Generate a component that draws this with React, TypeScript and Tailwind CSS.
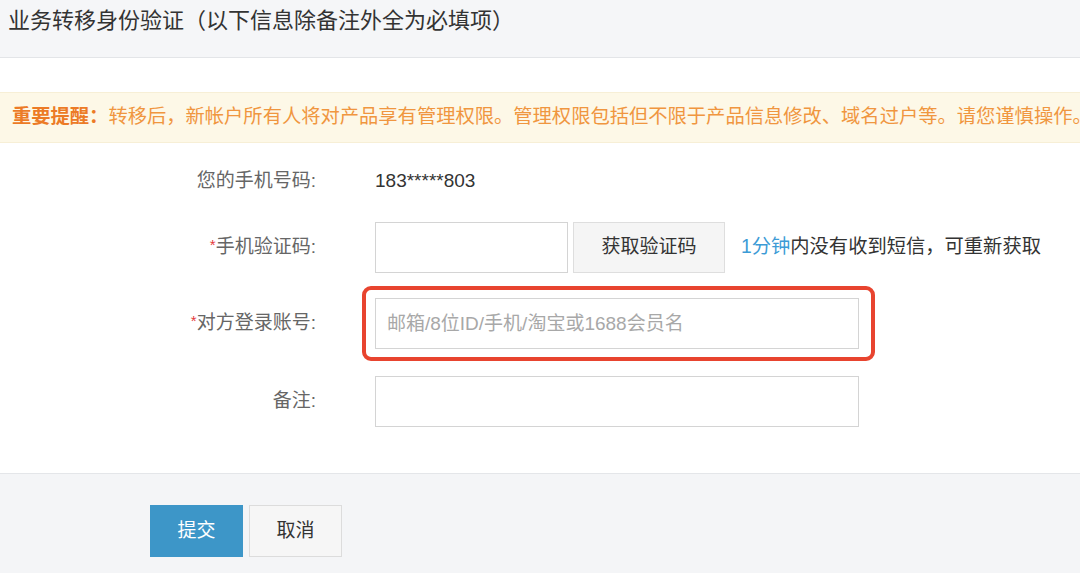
import React from 'react';

const font = "font-['Liberation_Sans','Noto_Sans_CJK_SC',sans-serif]";

const Label: React.FC<{ text: string; required?: boolean }> = ({ text, required }) => (
    <div className="w-[316px] shrink-0 text-right text-[19px] text-[#666666]">
        {required && <span className="text-[#e5393c] text-[15px] align-top relative top-[1px]">*</span>}
        {text}:
    </div>
);

export default function App() {
    const inputClasses = "h-[51px] border border-[#d4d4d4] bg-white px-[11px] text-[19px] text-[#333] outline-none placeholder:text-[#a8a8a8]";

    return (
        <div className={`w-full h-[573px] bg-white flex flex-col overflow-hidden ${font}`}>
            <div className="h-[58px] shrink-0 bg-[#f5f6f8] border-b border-[#e3e5e8] px-2 pt-[6px]">
                <h1 className="text-[22px] leading-[30px] text-[#333333]">业务转移身份验证（以下信息除备注外全为必填项）</h1>
            </div>

            <div className="h-[34px] shrink-0" />

            <div className="h-[51px] shrink-0 bg-[#fdf8e7] border-y border-[#f7efd6] flex items-center pl-3 whitespace-nowrap overflow-hidden text-[19.3px] text-[#f0963f]">
                <span className="font-bold text-[#ec7b26]">重要提醒：</span>
                转移后，新帐户所有人将对产品享有管理权限。管理权限包括但不限于产品信息修改、域名过户等。请您谨慎操作。
            </div>

            <div className="flex items-center h-[50px] mt-[13px]">
                <Label text="您的手机号码" />
                <span className="ml-[59px] text-[19px] text-[#333333]">183*****803</span>
            </div>

            <div className="flex items-center mt-[16px]">
                <Label text="手机验证码" required />
                <input className={`ml-[59px] w-[193px] ${inputClasses}`} />
                <button className="ml-[5px] w-[152px] h-[51px] bg-[#f5f5f5] border border-[#dedede] text-[19px] text-[#333333]">
                    获取验证码
                </button>
                <span className="ml-[16px] text-[19.3px] text-[#333333]">
                    <span className="text-[#3c9bd6]">1分钟</span>内没有收到短信，可重新获取
                </span>
            </div>

            <div className="flex items-center mt-[25px]">
                <Label text="对方登录账号" required />
                <div className="relative ml-[59px]">
                    <input className={`w-[484px] block ${inputClasses}`} placeholder="邮箱/8位ID/手机/淘宝或1688会员名" />
                    <div className="absolute -left-[13px] -top-[12px] -right-[16px] -bottom-[12px] border-[4px] border-[#e8442f] rounded-[9px] pointer-events-none" />
                </div>
            </div>

            <div className="flex items-center mt-[27px]">
                <Label text="备注" />
                <input className={`ml-[59px] w-[484px] ${inputClasses}`} />
            </div>

            <div className="h-[46px] shrink-0" />

            <div className="flex-1 bg-[#f4f5f7] border-t border-[#e4e6e9] pl-[150px] pt-[31px]">
                <div className="flex">
                    <button className="w-[93px] h-[52px] bg-[#3d96c8] text-white text-[19px]">提交</button>
                    <button className="ml-[6px] w-[93px] h-[52px] bg-[#f6f6f6] border border-[#dcdcdc] text-[19px] text-[#333333]">取消</button>
                </div>
            </div>
        </div>
    );
}
